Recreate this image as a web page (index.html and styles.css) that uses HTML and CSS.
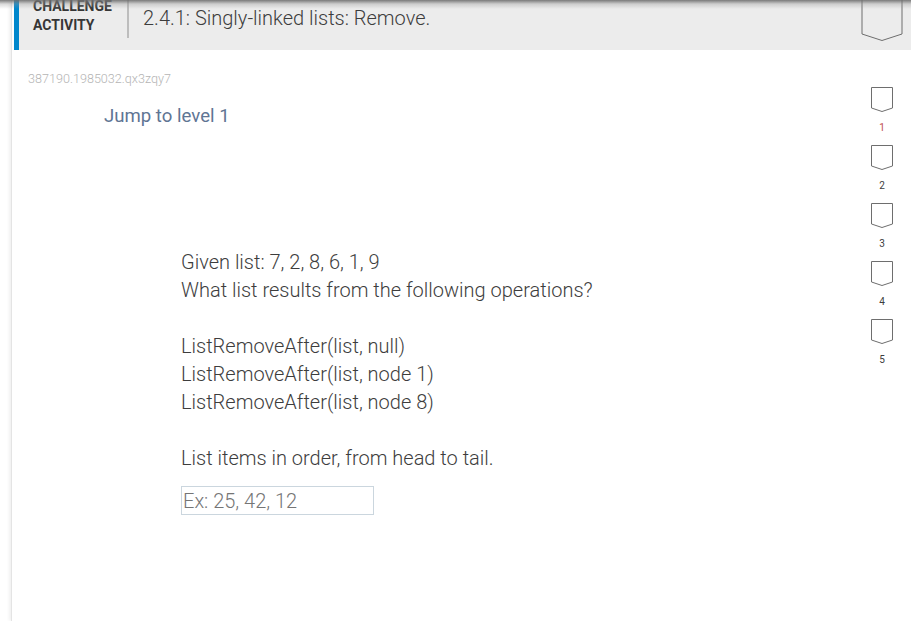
FILE: index.html
```html
<!DOCTYPE html>
<html lang="en">
<head>
    <meta charset="UTF-8">
    <title>Challenge activity</title>
    <link rel="stylesheet" href="styles.css">
</head>
<body>
    <div class="top-shadow"></div>
    <div class="page">
        <div class="header">
            <div class="label">CHALLENGE<br>ACTIVITY</div>
            <div class="title">2.4.1: Singly-linked lists: Remove.</div>
            <svg class="badge" width="42" height="42" viewBox="0 0 42 42">
                <path d="M1 0V34L21 40.5L41 34V0" fill="none" stroke="#6e6e6e" stroke-width="1"/>
            </svg>
        </div>
        <div class="activity">
            <div class="main">
                <div class="code">387190.1985032.qx3zqy7</div>
                <div class="jump">Jump to level 1</div>
                <div class="question">
                    <p>Given list: 7, 2, 8, 6, 1, 9<br>What list results from the following operations?</p>
                    <p>ListRemoveAfter(list, null)<br>ListRemoveAfter(list, node 1)<br>ListRemoveAfter(list, node 8)</p>
                    <p>List items in order, from head to tail.</p>
                    <input class="answer" type="text" placeholder="Ex: 25, 42, 12">
                </div>
            </div>
            <div class="levels">
                <div class="level current">
                    <svg width="24" height="27" viewBox="0 0 24 27"><path d="M1.500 1.500H22.500V22L12 25.500L1.500 22Z" fill="none" stroke="#6e6e6e"/></svg>
                    <span>1</span>
                </div>
                <div class="level">
                    <svg width="24" height="27" viewBox="0 0 24 27"><path d="M1.500 1.500H22.500V22L12 25.500L1.500 22Z" fill="none" stroke="#6e6e6e"/></svg>
                    <span>2</span>
                </div>
                <div class="level">
                    <svg width="24" height="27" viewBox="0 0 24 27"><path d="M1.500 1.500H22.500V22L12 25.500L1.500 22Z" fill="none" stroke="#6e6e6e"/></svg>
                    <span>3</span>
                </div>
                <div class="level">
                    <svg width="24" height="27" viewBox="0 0 24 27"><path d="M1.500 1.500H22.500V22L12 25.500L1.500 22Z" fill="none" stroke="#6e6e6e"/></svg>
                    <span>4</span>
                </div>
                <div class="level">
                    <svg width="24" height="27" viewBox="0 0 24 27"><path d="M1.500 1.500H22.500V22L12 25.500L1.500 22Z" fill="none" stroke="#6e6e6e"/></svg>
                    <span>5</span>
                </div>
            </div>
        </div>
    </div>
</body>
</html>
```

FILE: styles.css
```css
html, body {
    height: 100%;
}
body {
    margin: 0;
    overflow: hidden;
    background: #fff;
    font-family: Roboto, "Liberation Sans", sans-serif;
    color: #3d3d3d;
}
.top-shadow {
    position: absolute;
    z-index: 2;
    top: 0;
    left: 0;
    right: 0;
    height: 9px;
    background: linear-gradient(rgba(110, 110, 110, 0.9), rgba(150, 150, 150, 0.35) 45%, rgba(200, 200, 200, 0));
}
.page {
    height: 100%;
    padding-left: 2px;
    border-left: 1px solid #e4e4e4;
    margin-left: 11px;
    box-shadow: -2px 0 3px rgba(0, 0, 0, 0.06);
}
.header {
    height: 50px;
    background: #ececec;
    border-left: 5px solid #0087cc;
    display: flex;
    align-items: flex-start;
    overflow: hidden;
    position: relative;
}
.label {
    margin-top: -3px;
    margin-left: 14px;
    width: 94px;
    height: 42px;
    font-size: 14px;
    font-weight: 700;
    line-height: 19px;
    color: #363636;
}
.title {
    border-left: 2px solid #bdbdbd;
    height: 38px;
    padding-left: 14px;
    font-size: 20px;
    font-weight: 300;
    line-height: 36px;
}
.badge {
    position: absolute;
    top: 0;
    right: 8px;
}
.activity {
    display: flex;
}
.main {
    flex: 1;
}
.code {
    margin-top: 21px;
    margin-left: 14px;
    font-size: 12.6px;
    line-height: 16px;
    font-weight: 300;
    color: #b5b5b5;
}
.jump {
    margin-top: 18px;
    margin-left: 90px;
    font-size: 18.6px;
    line-height: 22px;
    color: #5f7594;
}
.question {
    margin-top: 121px;
    margin-left: 167px;
    font-size: 20px;
    font-weight: 300;
    line-height: 28px;
}
.question p {
    margin: 0 0 28px;
}
.answer {
    display: block;
    box-sizing: border-box;
    width: 193px;
    height: 29px;
    margin-top: -14px;
    padding: 0 1px;
    border: 1px solid #cbd6de;
    font-family: inherit;
    font-size: 20px;
    font-weight: 300;
    color: #3d3d3d;
}
.answer::placeholder {
    color: #757575;
    opacity: 1;
}
.levels {
    width: 58px;
    padding-top: 36px;
    display: flex;
    flex-direction: column;
    align-items: center;
    gap: 10px;
}
.level {
    height: 48px;
    display: flex;
    flex-direction: column;
    align-items: center;
}
.level svg {
    display: block;
}
.level span {
    margin-top: 9px;
    font-size: 10px;
    line-height: 12px;
}
.level.current span {
    color: #c0504d;
}
```
